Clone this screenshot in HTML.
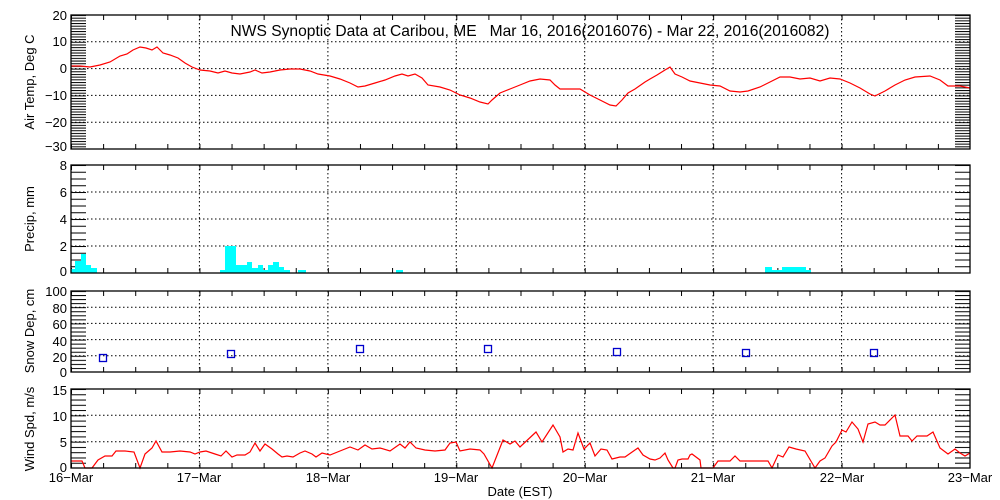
<!DOCTYPE html>
<html><head><meta charset="utf-8"><style>
html,body{margin:0;padding:0;background:#fff;}
svg{display:block;font-family:"Liberation Sans",sans-serif;}
</style></head><body>
<svg width="1000" height="500" viewBox="0 0 1000 500" xmlns="http://www.w3.org/2000/svg">
<defs>
<pattern id="h1" patternUnits="userSpaceOnUse" x="0" y="15" width="20" height="2.68"><rect x="0" y="0" width="20" height="1" fill="#000"/></pattern>
<pattern id="h2" patternUnits="userSpaceOnUse" x="0" y="165" width="20" height="6.75"><rect x="0" y="0" width="20" height="1" fill="#000"/></pattern>
<pattern id="h3" patternUnits="userSpaceOnUse" x="0" y="291" width="20" height="4.05"><rect x="0" y="0" width="20" height="1" fill="#000"/></pattern>
<pattern id="h4" patternUnits="userSpaceOnUse" x="0" y="389" width="20" height="5.267"><rect x="0" y="0" width="20" height="1" fill="#000"/></pattern>
<pattern id="v" patternUnits="userSpaceOnUse" x="71" y="0" width="32.107" height="10"><rect x="0" y="0" width="1" height="10" fill="#000"/></pattern>
</defs>
<rect width="1000" height="500" fill="#fff"/>
<text x="530" y="36" font-size="15.6" text-anchor="middle" fill="#000" xml:space="preserve">NWS Synoptic Data at Caribou, ME   Mar 16, 2016(2016076) - Mar 22, 2016(2016082)</text>
<g font-size="13" fill="#000" text-anchor="end">
<text x="67" y="20">20</text><text x="67" y="46">10</text><text x="67" y="73">0</text><text x="67" y="100">−10</text><text x="67" y="127">−20</text><text x="67" y="151">−30</text>
<text x="67" y="170">8</text><text x="67" y="197">6</text><text x="67" y="224">4</text><text x="67" y="251">2</text><text x="67" y="276">0</text>
<text x="67" y="296">100</text><text x="67" y="313">80</text><text x="67" y="329">60</text><text x="67" y="346">40</text><text x="67" y="362">20</text><text x="67" y="377">0</text>
<text x="67" y="395">15</text><text x="67" y="421">10</text><text x="67" y="447">5</text><text x="67" y="472">0</text>
</g>
<g font-size="13" fill="#000" text-anchor="middle">
<text x="71" y="482">16−Mar</text><text x="199" y="482">17−Mar</text><text x="328" y="482">18−Mar</text><text x="456" y="482">19−Mar</text><text x="585" y="482">20−Mar</text><text x="713" y="482">21−Mar</text><text x="842" y="482">22−Mar</text><text x="970" y="482">23−Mar</text>
<text x="520" y="496">Date (EST)</text>
</g>
<g font-size="13" fill="#000" text-anchor="middle">
<text transform="translate(34,82) rotate(-90)">Air Temp, Deg C</text>
<text transform="translate(34,219) rotate(-90)">Precip, mm</text>
<text transform="translate(34,331) rotate(-90)">Snow Dep, cm</text>
<text transform="translate(34,429) rotate(-90)">Wind Spd, m/s</text>
</g>
<!-- grid -->
<g stroke="#000" stroke-width="1" stroke-dasharray="1.5,2.5" fill="none">
<path d="M199.4 15V149M327.9 15V149M456.3 15V149M584.7 15V149M713.1 15V149M841.6 15V149 M71 41.8H970M71 68.6H970M71 95.4H970M71 122.2H970"/>
<path d="M199.4 165V273M327.9 165V273M456.3 165V273M584.7 165V273M713.1 165V273M841.6 165V273 M71 192H970M71 219H970M71 246H970"/>
<path d="M199.4 291V372M327.9 291V372M456.3 291V372M584.7 291V372M713.1 291V372M841.6 291V372 M71 307.2H970M71 323.4H970M71 339.6H970M71 355.8H970"/>
<path d="M199.4 389V468M327.9 389V468M456.3 389V468M584.7 389V468M713.1 389V468M841.6 389V468 M71 415.3H970M71 441.7H970"/>
</g>
<!-- minor ticks -->
<rect x="71" y="14.5" width="15" height="135" fill="url(#h1)"/><rect x="955" y="14.5" width="15" height="135" fill="url(#h1)"/>
<rect x="71" y="164.5" width="15" height="109" fill="url(#h2)"/><rect x="955" y="164.5" width="15" height="109" fill="url(#h2)"/>
<rect x="71" y="290.5" width="15" height="82" fill="url(#h3)"/><rect x="955" y="290.5" width="15" height="82" fill="url(#h3)"/>
<rect x="71" y="388.5" width="15" height="80" fill="url(#h4)"/><rect x="955" y="388.5" width="15" height="80" fill="url(#h4)"/>
<g fill="url(#v)">
<rect x="71" y="15" width="899" height="5"/><rect x="71" y="144" width="899" height="5"/>
<rect x="71" y="165" width="899" height="5"/><rect x="71" y="268" width="899" height="5"/>
<rect x="71" y="291" width="899" height="5"/><rect x="71" y="367" width="899" height="5"/>
<rect x="71" y="389" width="899" height="5"/><rect x="71" y="463" width="899" height="5"/>
</g>
<g fill="#00ffff">
<rect x="71" y="269" width="4" height="4"/><rect x="75" y="261" width="6" height="12"/><rect x="81" y="254" width="5" height="19"/><rect x="86" y="265" width="5" height="8"/><rect x="91" y="268" width="6" height="5"/>
<rect x="220" y="270" width="5" height="3"/><rect x="225" y="246" width="11" height="27"/><rect x="236" y="265" width="11" height="8"/><rect x="247" y="262" width="5" height="11"/><rect x="252" y="268" width="6" height="5"/><rect x="258" y="265" width="5" height="8"/><rect x="263" y="270" width="5" height="3"/><rect x="268" y="265" width="5" height="8"/><rect x="273" y="262" width="6" height="11"/><rect x="279" y="267" width="5" height="6"/><rect x="284" y="270" width="6" height="3"/><rect x="298" y="270" width="8" height="3"/><rect x="396" y="270" width="7" height="3"/>
<rect x="765" y="267" width="7" height="6"/><rect x="772" y="270" width="10" height="3"/><rect x="782" y="267" width="24" height="6"/><rect x="806" y="270" width="5" height="3"/>
</g>
<g fill="none" stroke="#0000cc" stroke-width="1.3">
<rect x="99.5" y="354.5" width="7" height="7"/><rect x="227.5" y="350.5" width="7" height="7"/><rect x="356.5" y="345.5" width="7" height="7"/><rect x="484.5" y="345.5" width="7" height="7"/><rect x="613.5" y="348.5" width="7" height="7"/><rect x="742.5" y="349.5" width="7" height="7"/><rect x="870.5" y="349.5" width="7" height="7"/>
</g>
<g fill="none" stroke="#ff0000" stroke-width="1.2">
<polyline points="71,66 80,66 90,67 100,65 110,62 120,56 127,54 133,50 140,47 146,48 152,50 157,47 163,53 170,55 178,58 185,63 192,67 200,70 210,71 218,73 225,71 232,73 240,74 250,72 255,70 262,73 270,72 280,70 290,69 300,69 310,71 318,74 330,76 340,79 350,83 358,87 365,86 375,83 385,80 395,76 402,74 408,76 415,74 422,78 428,85 440,87 450,90 460,95 470,98 480,102 488,104 492,100 500,93 510,89 520,85 530,81 540,79 550,80 555,85 560,89 570,89 580,89 590,95 600,100 610,105 616,106 622,100 628,93 635,89 645,82 650,79 657,75 665,70 670,67 675,74 682,77 690,81 700,83 710,85 720,86 730,91 740,92 748,91 760,87 770,82 780,77 790,77 800,79 810,78 820,81 830,78 840,79 850,83 860,88 870,94 875,96 885,91 895,85 905,80 915,77 930,76 940,80 948,86 960,86 970,88"/>
<polyline points="71,461 82,461 85,468 92,468 98,460 105,456 112,456 116,451 125,451 134,452 140,468 145,454 152,448 156,441 162,452 170,452 180,451 190,452 195,454 200,452 206,451 215,454 221,456 226,451 232,457 237,455 245,455 250,452 255,443 260,451 265,444 272,449 278,454 282,457 287,456 293,457 300,453 305,451 312,454 316,457 322,453 330,455 340,451 350,447 358,450 365,445 372,449 380,448 390,451 400,444 405,448 410,442 416,448 425,450 435,451 445,450 450,443 456,442 460,451 470,449 480,450 484,454 492,468 503,440 510,444 515,441 520,447 536,432 542,442 553,425 560,437 563,452 568,449 573,450 578,433 584,449 590,443 595,456 601,449 607,450 612,459 620,457 625,457 635,450 638,448 643,455 650,459 655,460 660,458 665,453 668,460 673,468 675,468 678,460 682,459 688,459 690,455 692,454 700,460 701,468 713,468 718,461 730,461 735,456 740,461 768,461 772,468 778,455 783,457 789,447 796,449 805,451 815,468 820,461 825,458 832,446 836,442 842,430 846,432 852,422 858,429 863,442 868,424 875,422 880,425 885,425 895,415 900,436 908,436 912,441 917,436 927,436 933,432 940,448 948,454 955,449 960,453 965,456 970,453"/>
</g>
<g fill="none" stroke="#000" stroke-width="1.3">
<rect x="71" y="15" width="899" height="134"/>
<rect x="71" y="165" width="899" height="108"/>
<rect x="71" y="291" width="899" height="81"/>
<rect x="71" y="389" width="899" height="79"/>
</g>
</svg>
</body></html>
